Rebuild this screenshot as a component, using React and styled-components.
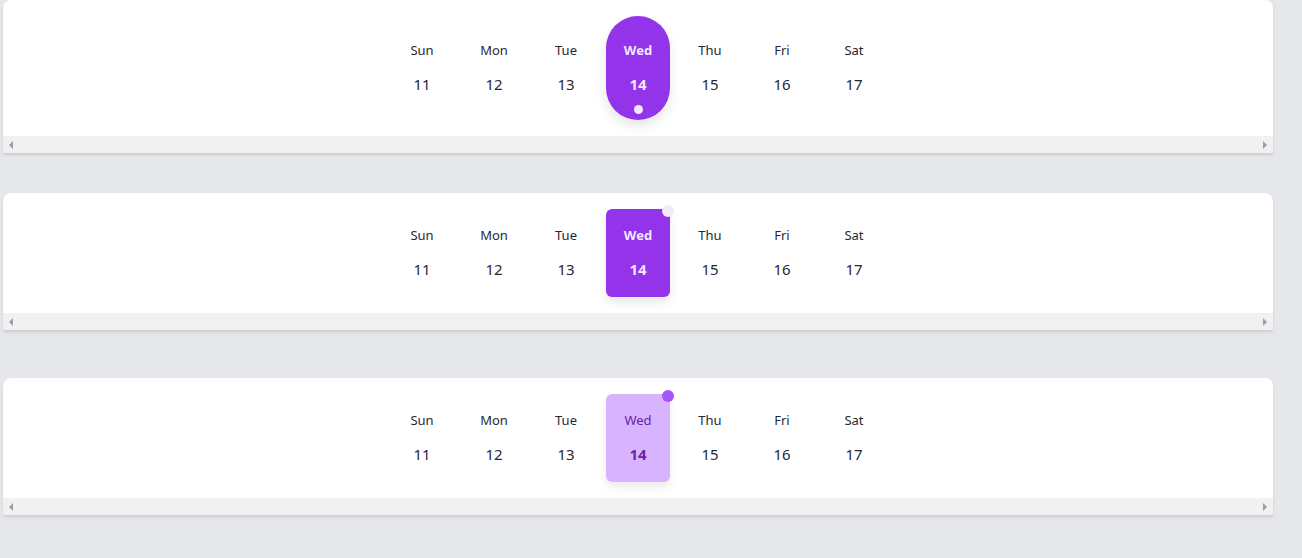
import React from 'react';
import styled, { createGlobalStyle, css } from 'styled-components';

const GlobalStyle = createGlobalStyle`
  * { box-sizing: border-box; }
  body {
    margin: 0;
    background: #e5e7eb;
    font-family: "Noto Sans", "Open Sans", sans-serif;
  }
`;

const Page = styled.div`
  display: flex;
  flex-direction: column;
  padding: 0 29px 0 3px;
  height: 558px;
  overflow: hidden;
`;

const Card = styled.div`
  background: #ffffff;
  border-radius: 8px 8px 2px 2px;
  box-shadow: 0 2px 3px rgba(0, 0, 0, 0.12);
  margin-bottom: ${(p) => p.$spacing}px;
  overflow: hidden;
`;

const Week = styled.div`
  display: flex;
  justify-content: center;
  gap: 8px;
  padding: 16px 0;
`;

const Day = styled.div`
  position: relative;
  width: 64px;
  display: flex;
  flex-direction: column;
  align-items: center;
  gap: 12px;
  padding: ${(p) => (p.$variant === 'pill' ? '24px 0' : '16px 0')};
  color: #1f2937;

  ${(p) => p.$selected && p.$variant === 'pill' && css`
    background: #9333ea;
    color: #f3e8ff;
    border-radius: 32px;
    box-shadow: 0 6px 12px rgba(0, 0, 0, 0.1);
  `}
  ${(p) => p.$selected && p.$variant === 'solid' && css`
    background: #9333ea;
    color: #f3e8ff;
    border-radius: 6px;
    box-shadow: 0 5px 10px rgba(0, 0, 0, 0.1);
  `}
  ${(p) => p.$selected && p.$variant === 'soft' && css`
    background: #d8b4fe;
    color: #6b21a8;
    border-radius: 6px;
    box-shadow: 0 5px 10px rgba(0, 0, 0, 0.08);
  `}
`;

const Label = styled.span`
  font-size: 13px;
  line-height: 20px;
  font-weight: ${(p) => (p.$bold ? 700 : 400)};
`;

const Num = styled.span`
  font-size: 15px;
  line-height: 24px;
  font-weight: ${(p) => (p.$bold ? 700 : 400)};
`;

const BottomDot = styled.span`
  position: absolute;
  left: 50%;
  bottom: 6px;
  width: 9px;
  height: 9px;
  margin-left: -4.5px;
  border-radius: 50%;
  background: #f3e8ff;
`;

const CornerDot = styled.span`
  position: absolute;
  top: -4px;
  right: -4px;
  width: 12px;
  height: 12px;
  border-radius: 50%;
  background: ${(p) => p.$color};
`;

const ScrollBar = styled.div`
  height: 17px;
  background: #f1f1f1;
  display: flex;
  align-items: center;
  justify-content: space-between;
  padding: 0 6px 0 6px;
`;

const Arrow = styled.span`
  width: 0;
  height: 0;
  border-top: 4px solid transparent;
  border-bottom: 4px solid transparent;
  ${(p) => (p.$dir === 'left'
    ? 'border-right: 4px solid #9e9e9e;'
    : 'border-left: 4px solid #9e9e9e;')}
`;

const days = [
  ['Sun', 11], ['Mon', 12], ['Tue', 13], ['Wed', 14],
  ['Thu', 15], ['Fri', 16], ['Sat', 17],
];

const WeekCard = ({ variant, spacing }) => (
  <Card $spacing={spacing}>
    <Week>
      {days.map(([name, n]) => {
        const selected = n === 14;
        return (
          <Day key={name} $variant={variant} $selected={selected}>
            <Label $bold={selected && variant !== 'soft'}>{name}</Label>
            <Num $bold={selected}>{n}</Num>
            {selected && variant === 'pill' && <BottomDot />}
            {selected && variant === 'solid' && <CornerDot $color="#f3e8ff" />}
            {selected && variant === 'soft' && <CornerDot $color="#a855f7" />}
          </Day>
        );
      })}
    </Week>
    <ScrollBar>
      <Arrow $dir="left" />
      <Arrow $dir="right" />
    </ScrollBar>
  </Card>
);

const App = () => (
  <>
    <GlobalStyle />
    <Page>
      <WeekCard variant="pill" spacing={40} />
      <WeekCard variant="solid" spacing={48} />
      <WeekCard variant="soft" spacing={0} />
    </Page>
  </>
);

export default App;
